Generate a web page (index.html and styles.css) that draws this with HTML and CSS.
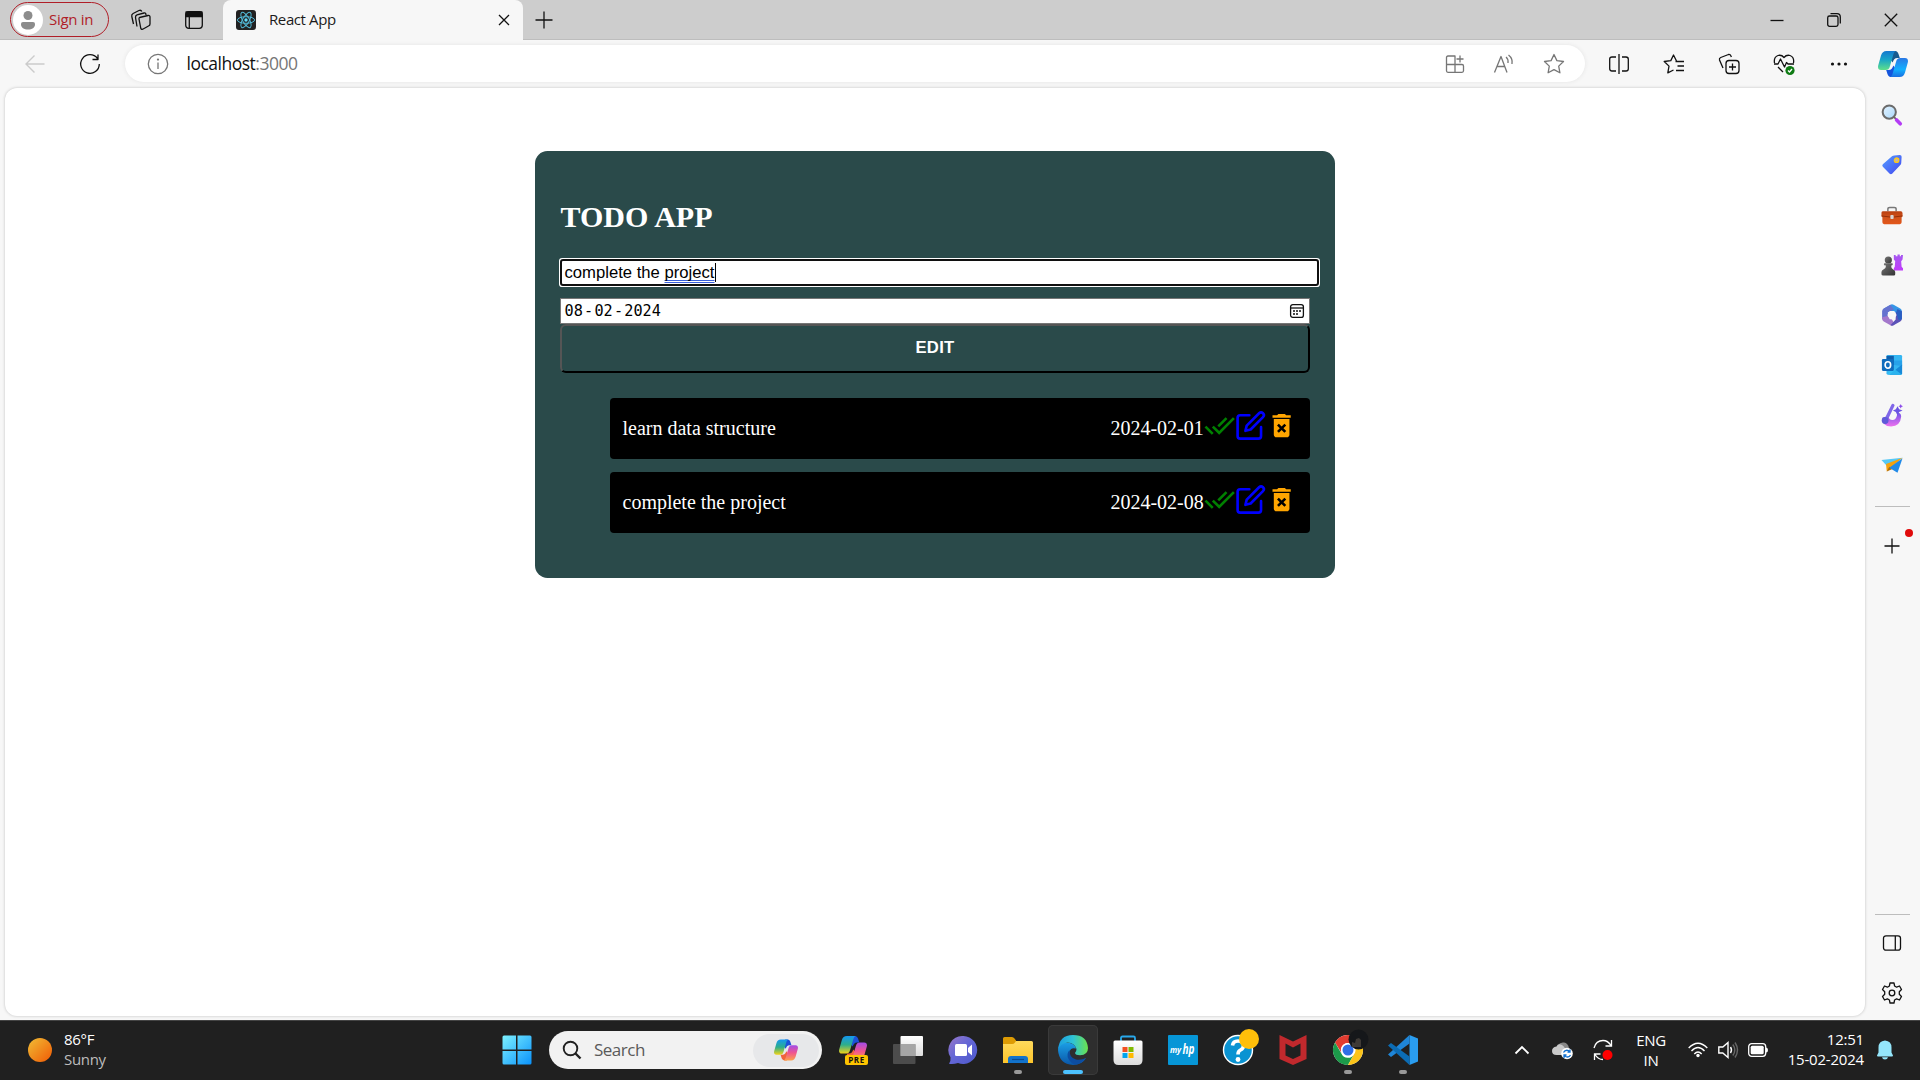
FILE: index.html
```html
<!DOCTYPE html>
<html lang="en">
<head>
<meta charset="utf-8">
<title>React App</title>
<link rel="stylesheet" href="styles.css">
</head>
<body>
<svg class="defs" width="0" height="0">
  <defs>
    <linearGradient id="gTeal" x1="0" y1="0" x2="0" y2="1"><stop offset="0" stop-color="#1478cf"/><stop offset=".45" stop-color="#18a5c8"/><stop offset="1" stop-color="#5fe08a"/></linearGradient>
    <linearGradient id="gBlue" x1="0" y1="0" x2="0" y2="1"><stop offset="0" stop-color="#2a78e4"/><stop offset=".6" stop-color="#12b0ff"/><stop offset="1" stop-color="#1a6fe0"/></linearGradient>
    <linearGradient id="gRain" x1="0" y1="0" x2="0" y2="1"><stop offset="0" stop-color="#1497f0"/><stop offset=".5" stop-color="#2dae8b"/><stop offset="1" stop-color="#f3d317"/></linearGradient>
    <linearGradient id="gPink" x1="0" y1="0" x2="0" y2="1"><stop offset="0" stop-color="#a24be8"/><stop offset=".5" stop-color="#f0548f"/><stop offset="1" stop-color="#fda14a"/></linearGradient>
    <linearGradient id="gWin" x1="0" y1="0" x2="1" y2="1"><stop offset="0" stop-color="#7df1ff"/><stop offset="1" stop-color="#0a92fb"/></linearGradient>
    <linearGradient id="gSun" x1="0" y1="0" x2="1" y2="1"><stop offset="0" stop-color="#f0bd35"/><stop offset="1" stop-color="#f05a05"/></linearGradient>
    <linearGradient id="gTag" x1="0" y1="0" x2="1" y2="1"><stop offset="0" stop-color="#54a2ff"/><stop offset="1" stop-color="#4444f0"/></linearGradient>
    <linearGradient id="gBox" x1="0" y1="0" x2="0" y2="1"><stop offset="0" stop-color="#b93f10"/><stop offset=".5" stop-color="#d3541c"/><stop offset="1" stop-color="#e2561a"/></linearGradient>
    <linearGradient id="gRook" x1="0" y1="0" x2="0" y2="1"><stop offset="0" stop-color="#a55af0"/><stop offset="1" stop-color="#c13cfb"/></linearGradient>
    <linearGradient id="gPawn" x1="0" y1="0" x2="1" y2="1"><stop offset="0" stop-color="#777"/><stop offset="1" stop-color="#333"/></linearGradient>
    <linearGradient id="gLens" x1="0" y1="0" x2="1" y2="1"><stop offset="0" stop-color="#e4f3ff"/><stop offset="1" stop-color="#a9d8fb"/></linearGradient>
    <linearGradient id="gDrop" x1="0" y1="0" x2="0" y2="1"><stop offset="0" stop-color="#7054e8"/><stop offset="1" stop-color="#ed70ee"/></linearGradient>
    <linearGradient id="gFolder" x1="0" y1="0" x2="0" y2="1"><stop offset="0" stop-color="#ffda5c"/><stop offset="1" stop-color="#fdc52c"/></linearGradient>
    <linearGradient id="gEdgeA" x1="0" y1="0" x2="1" y2="0"><stop offset="0" stop-color="#1b9de0"/><stop offset=".5" stop-color="#2fc3d6"/><stop offset="1" stop-color="#6be34c"/></linearGradient>
    <linearGradient id="gEdgeB" x1="0" y1="0" x2="0" y2="1"><stop offset="0" stop-color="#1b9fe6"/><stop offset="1" stop-color="#0a56a8"/></linearGradient>
    <linearGradient id="gStore" x1="0" y1="0" x2="0" y2="1"><stop offset="0" stop-color="#fff"/><stop offset="1" stop-color="#dcdcdc"/></linearGradient>
    <linearGradient id="gChat" x1="0" y1="0" x2="1" y2="1"><stop offset="0" stop-color="#9a78c8"/><stop offset=".45" stop-color="#6567d6"/><stop offset="1" stop-color="#4c58cc"/></linearGradient>
    <linearGradient id="gTask" x1="0" y1="0" x2="0" y2="1"><stop offset="0" stop-color="#fff"/><stop offset="1" stop-color="#ddd"/></linearGradient>
    <symbol id="copilot" viewBox="0 0 30 26">
      <path d="M14 0h2.500c3 0 3.800 2 4.500 4.500l.8 2.500h-2.300c-3 0-4 2-4.800 4.500L12 8z" class="cd"/>
      <path d="M16 26h-2.500c-3 0-3.800-2-4.500-4.500L8.200 19h2.300c3 0 4-2 4.800-4.500L18 18z" class="cc"/>
      <path d="M8.500 0h9.500c-1.500.5-2.200 2-2.800 4L12 15c-.8 3-2 4-4.500 4H3C.5 19-.4 17 .2 14.500L3 4.500C4 1.500 5.500 0 8.500 0z" class="ca"/>
      <path d="M21.500 26H12c1.500-.5 2.200-2 2.800-4L18 11c.8-3 2-4 4.500-4H27c2.500 0 3.400 2 2.800 4.500L27 21.500c-1 3-2.500 4.500-5.500 4.500z" class="cb"/>
    </symbol>
  </defs>
</svg>

<div class="browser">
  <header class="tabstrip">
    <div class="signin">
      <svg width="30" height="30"><circle cx="15" cy="15" r="15" fill="#fff"/><circle cx="15" cy="10.500" r="4.500" fill="#8c8c8c"/><path d="M8 19q0-2 2-2h10q2 0 2 2c0 4-3 5.500-7 5.500S8 23 8 19z" fill="#8c8c8c"/></svg>
      <span>Sign in</span>
    </div>
    <svg class="workspaces line" width="22" height="22" viewBox="0 0 22 22"><path d="M9.500 8.500l8.500-2q2-.3 2 1.500v7q0 1.500-1.500 2l-5.800 3.200q-1.700.6-2-1.400L9 10q-.1-1.200.5-1.500z"/><path d="M7 17.500l-1.500-9q-.2-2 1.500-2.700L14 4M16 6q0-2.500-2-2M3.500 15L1.800 7.500q-.5-2 1.300-3L9 1.500q2-.8 2.800 1"/></svg>
    <svg class="tabactions line" width="20" height="20" viewBox="0 0 20 20"><rect x="1.700" y="1.700" width="16.600" height="16.600" rx="3"/><path d="M2 2h16v4.500H2z" fill="#111"/><path d="M5.300 6v12"/></svg>
    <div class="tab">
      <svg width="20" height="20" viewBox="0 0 20 20"><rect width="20" height="20" rx="3" fill="#222"/><g fill="none" stroke="#53b9d6" stroke-width="1"><ellipse cx="10" cy="10" rx="8.600" ry="3.300"/><ellipse cx="10" cy="10" rx="8.600" ry="3.300" transform="rotate(60 10 10)"/><ellipse cx="10" cy="10" rx="8.600" ry="3.300" transform="rotate(120 10 10)"/></g><circle cx="10" cy="10" r="1.700" fill="#61dafb"/></svg>
      <span>React App</span>
      <svg class="line" width="12" height="12" viewBox="0 0 12 12"><path d="M1 1l10 10M11 1L1 11"/></svg>
    </div>
    <svg class="newtab line" width="18" height="18" viewBox="0 0 18 18"><path d="M9 .5v17M.5 9h17"/></svg>
    <div class="winctl">
      <svg class="line" width="14" height="14" viewBox="0 0 14 14"><path d="M.5 7.500h13"/></svg>
      <svg class="line" width="14" height="14" viewBox="0 0 14 14"><rect x=".7" y="3" width="10.300" height="10.300" rx="1.800"/><path d="M3.500.7H10q3.300 0 3.300 3.300v6.500"/></svg>
      <svg class="line" width="14" height="14" viewBox="0 0 14 14"><path d="M.8.800l12.400 12.400M13.200.8L.8 13.200"/></svg>
    </div>
  </header>

  <div class="toolbar">
    <svg class="back" width="20" height="20" viewBox="0 0 20 20"><path d="M19.500 10H1M9.500 1.500L1 10l8.500 8.500"/></svg>
    <svg class="reload line" width="22" height="22" viewBox="0 0 22 22"><path d="M18.500 5.500A9.300 9.300 0 1 0 20.300 11M19 1.500v5h-5.500"/></svg>
    <div class="address">
      <svg class="grey info" width="22" height="22" viewBox="0 0 22 22"><circle cx="11" cy="11" r="9.700"/><path d="M11 9.500V16"/><circle cx="11" cy="6.600" r=".5"/></svg>
      <span class="url">localhost<i>:3000</i></span>
      <div class="addr-icons">
        <svg class="grey" width="20" height="20" viewBox="0 0 20 20"><path d="M10 18.300V2H3Q1.500 2 1.500 3.500v13.300q0 1.500 1.500 1.500h14q1.500 0 1.500-1.500V12q0-1.500-1.500-1.500H1.500M15 1.500v7M11.500 5h7"/></svg>
        <svg class="grey" width="22" height="20" viewBox="0 0 22 20"><path d="M1.500 18.500L8 2.500l6 16M4 12.500h8M13 3q2.500 2 2 6M15.500 1q4.500 3.500 3.500 9"/></svg>
        <svg class="grey" width="22" height="22" viewBox="0 0 22 22"><path d="M11 1.500l2.900 6.100 6.600.9-4.800 4.600 1.200 6.700L11 16.600l-5.900 3.200 1.200-6.700L1.500 8.500l6.600-.9z"/></svg>
      </div>
    </div>
    <div class="tools">
      <svg class="line" width="22" height="22" viewBox="0 0 22 22"><path d="M11 1v20M8 4H4Q1.700 4 1.700 6v9.500Q1.700 18 4 18h4M14 4h4q2.300 0 2.300 2.200v9.600q0 2.200-2.300 2.200h-4"/></svg>
      <svg class="line" width="22" height="22" viewBox="0 0 22 22"><path d="M13.500 8L10.500 2 7.800 7.600 1.200 8.500l4.800 4.600-1.200 6.700L10.500 17M12.500 8.500H21M14.500 13H21M13 17.500h8"/></svg>
      <svg class="line" width="22" height="22" viewBox="0 0 22 22"><rect x="8" y="7.500" width="13" height="13" rx="3"/><path d="M14.500 10.500v7M11 14h7M5 15L1.500 7Q1 5.200 2.700 4.500L10.500 1.500q2-.5 2.900 2.500"/></svg>
      <svg class="line" width="22" height="22" viewBox="0 0 22 22"><path d="M1.500 10Q.5 4 5 2.500q3.500-1 6 2 2.500-3 6-2Q21.500 4 20.500 10M1 11h4l2.500-5 4 8 2-4.500 1.500 1.500h6M5 14l5 5"/><circle cx="17" cy="17.500" r="4.600" fill="#0f7b14" stroke="none"/><path d="M15 17.500l1.500 1.500 2.500-3" stroke="#fff"/></svg>
      <svg width="22" height="22" viewBox="0 0 22 22" fill="#111"><circle cx="4.500" cy="11" r="1.600"/><circle cx="11" cy="11" r="1.600"/><circle cx="17.500" cy="11" r="1.600"/></svg>
    </div>
    <svg class="cop cop-edge" width="30" height="26"><use href="#copilot"/></svg>
  </div>

  <div class="content">
    <main class="viewport">
      <section class="card">
        <h1>TODO APP</h1>
        <div class="task-input">complete the <span class="grammar">project</span><span class="caret"></span></div>
        <div class="date-input">
          <span>08</span><span>-</span><span>02</span><span>-</span><span>2024</span>
          <svg class="line cal" width="14" height="14" viewBox="0 0 14 14"><rect x=".6" y=".6" width="12.800" height="12.800" rx="2.200"/><path d="M.6 4h12.800"/><path d="M3 7h2m1 0h2m1 0h2M3 10h2m1 0h2" stroke-width="1.500"/></svg>
        </div>
        <button class="edit-btn" type="button">EDIT</button>
        <ul class="list">
          <li><span>learn data structure</span><time>2024-02-01</time>
            <svg class="done" viewBox="0 0 24 24"><path d="M18 7l-1.410-1.410-6.340 6.340 1.410 1.410L18 7zm4.240-1.410L11.660 16.170 7.480 12l-1.410 1.410L11.660 19l12-12-1.420-1.410zM.41 13.410L6 19l1.410-1.410L1.830 12 .41 13.410z"/></svg>
            <svg class="edit" viewBox="0 0 24 24"><path d="M11 4H4a2 2 0 0 0-2 2v14a2 2 0 0 0 2 2h14a2 2 0 0 0 2-2v-7"/><path d="M18.500 2.500a2.121 2.121 0 0 1 3 3L12 15l-4 1 1-4 9.500-9.500z"/></svg>
            <svg class="trash" viewBox="0 0 24 24"><path d="M6 19c0 1.100.9 2 2 2h8c1.100 0 2-.9 2-2V7H6v12zm2.460-7.120l1.410-1.410L12 12.590l2.120-2.120 1.410 1.410L13.410 14l2.120 2.120-1.410 1.410L12 15.410l-2.120 2.120-1.410-1.410L10.590 14l-2.130-2.120zM15.500 4l-1-1h-5l-1 1H5v2h14V4z"/></svg>
          </li>
          <li><span>complete the project</span><time>2024-02-08</time>
            <svg class="done" viewBox="0 0 24 24"><path d="M18 7l-1.410-1.410-6.340 6.340 1.410 1.410L18 7zm4.240-1.410L11.660 16.170 7.480 12l-1.410 1.410L11.660 19l12-12-1.420-1.410zM.41 13.410L6 19l1.410-1.410L1.830 12 .41 13.410z"/></svg>
            <svg class="edit" viewBox="0 0 24 24"><path d="M11 4H4a2 2 0 0 0-2 2v14a2 2 0 0 0 2 2h14a2 2 0 0 0 2-2v-7"/><path d="M18.500 2.500a2.121 2.121 0 0 1 3 3L12 15l-4 1 1-4 9.500-9.500z"/></svg>
            <svg class="trash" viewBox="0 0 24 24"><path d="M6 19c0 1.100.9 2 2 2h8c1.100 0 2-.9 2-2V7H6v12zm2.460-7.120l1.410-1.410L12 12.590l2.120-2.120 1.410 1.410L13.410 14l2.120 2.120-1.410 1.410L12 15.410l-2.120 2.120-1.410-1.410L10.590 14l-2.130-2.120zM15.500 4l-1-1h-5l-1 1H5v2h14V4z"/></svg>
          </li>
        </ul>
      </section>
    </main>

    <aside class="sidebar">
      <div class="apps">
        <svg viewBox="0 0 24 24"><path d="M14 14l3 3" stroke="#666" stroke-width="2"/><path d="M17 17.500l4 4" stroke="#b43cf5" stroke-width="4" stroke-linecap="round"/><circle cx="9" cy="8.800" r="7.200" fill="url(#gLens)" stroke="#6b6b6b" stroke-width="2.200"/></svg>
        <svg viewBox="0 0 24 24"><path d="M12 2.500Q13 1.500 14.500 1.500L20.500 1q2 0 2 2l-.4 6.500q0 1.500-1 2.500l-9 9.500q-1.300 1-2.600 0l-7.500-7.500q-1.200-1.500 0-2.800z" fill="url(#gTag)"/><circle cx="17" cy="6.800" r="2.300" fill="#b9b3c4" stroke="#fbc721" stroke-width="1.700"/></svg>
        <svg viewBox="0 0 24 24"><path d="M7.500 8V5.500q0-1.800 2-1.800h5q2 0 2 1.800V8" fill="none" stroke="#777" stroke-width="1.600"/><path d="M.5 9.500Q.5 8 2.500 8h19q2 0 2 2v2.500q0 1.500-1 2V20q0 2-2 2h-17q-2 0-2-2v-5.500Q.5 14 .5 12z" fill="url(#gBox)"/><path d="M.5 13l11.500 1.500 11.500-1.500" stroke="#8e2c08" fill="none"/><rect x="10.200" y="12" width="3.600" height="4.400" rx="1" fill="#d7d7d7"/></svg>
        <svg viewBox="0 0 24 24"><path d="M14 1h2v1.500h2V.5h2.500v2h1.300V1h2.200l-.5 5-1.500 2 .5 6 1.500 1.500V18h-10v-2.500l1-1.500.5-6-1.500-2z" fill="url(#gRook)"/><circle cx="8" cy="6.500" r="3.900" fill="url(#gPawn)"/><path d="M3.500 10h9q1 1.500-.5 2.500h-1q0 3 2 4 2.500 1.200 2.500 3V22q0 1.500-1.500 1.500H2.500Q.5 23.500.5 22v-2.500q0-2 2.500-3 2.500-1 2.500-4H4Q2.500 11.500 3.500 10z" fill="url(#gPawn)"/></svg>
        <svg viewBox="0 0 24 24"><path d="M10.300.8Q12 0 13.700.8L21 5q1.800 1 1.800 3L17 9.500 7 8 2 5.800z" fill="#3595e6"/><path d="M10.300.8L3 5Q1.200 6 1.200 8v8.500L7.500 14V9L14 6z" fill="#6572cf"/><path d="M1.200 14.500V16q0 2 1.800 3l7.300 4.200q1.700.8 3.400 0L15 22l-3-5-5-4z" fill="#a478cc"/><path d="M22.800 8v8q0 2-1.800 3l-7.300 4.200q-1.700.8-3.400 0L16 17V9z" fill="#5b52b8"/><path d="M22.800 8v8q-1 2-4 1L16.500 9 18 5.500z" fill="#285fc3"/><path d="M9.500 7.500h5L17 12l-2.500 4.500h-5L7 12z" fill="#f7f7f7"/></svg>
        <svg viewBox="0 0 24 24"><rect x="6" y="1" width="17" height="21.500" rx="1.500" fill="#35b6f2"/><path d="M6 2h8v10H6z" fill="#0e5eac"/><path d="M14 7h9v6l-9-1z" fill="#27a2ea"/><path d="M9 22.500l14-11V21q0 1.500-1.500 1.500z" fill="#1689d9"/><path d="M9 12l14 10.500H8z" fill="#34c4f6" opacity=".7"/><rect x="1" y="5.500" width="13" height="13" rx="1.200" fill="#0f6cbd"/><ellipse cx="7.500" cy="12" rx="3" ry="3.500" fill="none" stroke="#fff" stroke-width="1.800"/></svg>
        <svg viewBox="0 0 24 24"><path d="M1.500 15Q1 24.500 11 24.500T22 14q0-4-3-4.500L17.500 12q-1 5.500-5 5.500T8 13z" fill="url(#gDrop)"/><path d="M13 1.500L6.500 15" stroke="#8067e8" stroke-width="3.600" stroke-linecap="round"/><circle cx="4.500" cy="18" r="3.700" fill="#5f5ad8"/><path d="M18 2.500l1.800 3.300L23.500 7l-3.700 1.800L18 12.500l-1.800-3.700L13 7l3.200-1.200z" fill="#6a55e3"/><path d="M21.500 0l.8 1.700L24 2.500l-1.700.8-.8 1.700-.8-1.700-1.700-.8 1.700-.8z" fill="#8c4bea"/></svg>
        <svg viewBox="0 0 24 24"><path d="M.5 6.500L23.500 4 7 13.500z" fill="#55c8f5"/><path d="M23.500 4L5.500 11l.8 8z" fill="#f6a20c"/><path d="M6.300 19L9 14l4 2z" fill="#b36b00"/><path d="M23.500 4.500L18 20.500 9 15z" fill="#218ae8"/></svg>
      </div>
      <hr>
      <div class="add">
        <svg class="line" width="16" height="16" viewBox="0 0 16 16"><path d="M8 .5v15M.5 8h15"/></svg>
        <b class="dot"></b>
      </div>
      <hr class="lower">
      <svg class="line panel" width="20" height="16" viewBox="0 0 20 16"><rect x="1.500" y=".8" width="17" height="14.400" rx="2.500"/><path d="M13.300 1v14"/></svg>
      <svg class="line gear" width="24" height="24" viewBox="0 0 24 24"><circle cx="12" cy="12" r="2.800"/><path d="M10 2h4l.6 3 2 1.200L19.500 5l2 3.500L19.300 10.700v2.600L21.500 15.500l-2 3.500-2.900-1.200-2 1.200L14 22h-4l-.6-3-2-1.200L4.500 19l-2-3.500L4.700 13.300v-2.600L2.500 8.500l2-3.500 2.900 1.200 2-1.200z"/></svg>
    </aside>
  </div>
</div>

<footer class="taskbar">
  <div class="weather">
    <svg width="24" height="24"><circle cx="12" cy="12" r="12" fill="url(#gSun)"/></svg>
    <div class="twolines"><div>86°F</div><div class="dim">Sunny</div></div>
  </div>
  <svg class="start" width="30" height="30" viewBox="0 0 30 30"><path d="M2 .5h12v14H.5V2Q.5.500 2 .5zM15.500.5H28q1.500 0 1.500 1.500v12.500h-14zM.5 16H14v13.500H2Q.5 29.500.5 28zM15.500 16h14v12q0 1.500-1.500 1.500H15.500z" fill="url(#gWin)"/></svg>
  <div class="search">
    <svg width="20" height="20" viewBox="0 0 20 20"><circle cx="8.500" cy="8.500" r="6.800" fill="none" stroke="#222" stroke-width="1.900"/><path d="M13.500 13.500l5 5" stroke="#222" stroke-width="2.400"/></svg>
    <span>Search</span>
    <div class="search-chip"><svg class="cop cop-rain" width="24" height="22"><use href="#copilot"/></svg></div>
  </div>
  <div class="pinned">
    <div class="slot"><svg class="cop cop-rain" viewBox="0 0 30 30"><svg x="1" y="1" width="28" height="27" preserveAspectRatio="none" viewBox="0 0 30 26"><use href="#copilot"/></svg><rect x="7" y="20" width="23" height="10" rx="2" fill="#fdc400"/><text x="18.500" y="27.800" class="pre">PRE</text></svg></div>
    <div class="slot"><svg viewBox="0 0 30 30"><rect x="7.500" y="1" width="22.500" height="20" rx="1" fill="url(#gTask)"/><rect y="9" width="22.500" height="20" rx="1" fill="#606060" opacity=".7"/><rect x="7.500" y="9" width="15" height="12" fill="#a6a6a6"/></svg></div>
    <div class="slot"><svg viewBox="0 0 30 30"><path d="M15.500 1A14 14 0 1 1 10 28q-4.500 1.500-9 .8 2-3 1.500-6.500A14 14 0 0 1 15.500 1z" fill="url(#gChat)"/><rect x="7" y="9" width="12" height="12" rx="1.500" fill="#fff"/><path d="M20 13l4-3.500v11L20 17z" fill="#fff"/></svg></div>
    <div class="slot run"><svg viewBox="0 0 30 30"><path d="M0 3.500Q0 2 1.500 2H9q1.500 0 2.500 1.500L13 5.500V12H0z" fill="#dd9b04"/><path d="M0 9h9q2 0 3-1.500l1-1.500h15.500Q30 6 30 7.500V28H0z" fill="url(#gFolder)"/><path d="M5 28v-4q0-3 3-3h14q3 0 3 3v4z" fill="#1273cc"/><path d="M9 24.500h12" stroke="#0a4b91" stroke-width="1.200"/></svg></div>
    <div class="slot active"><svg viewBox="0 0 30 30"><path d="M0 15Q1 7 8 7.500q9 .5 10 6-5-1.500-6.500 3Q10.500 25 20 26q4 0 8-3Q24 30 15 30 1 29 0 15z" fill="url(#gEdgeB)"/><path d="M0 15Q1 0 15 0q14 0 15 13 0 7-8 7.200-4.500 0-5-2.200 1.500-1.500 1.500-4Q16.500 7.500 9.500 7.500 2.500 8 0 15z" fill="url(#gEdgeA)"/><path d="M11.500 15Q8 19 10.500 24q3 5.500 8 5.500 6-1.500 9.500-6.500-5 2.500-10 1.500-7-2-6.500-9.500z" fill="#0c4da2"/></svg></div>
    <div class="slot"><svg viewBox="0 0 30 30"><path d="M8 7V3q0-1.500 1.500-1.500h11Q22 1.500 22 3v4" fill="none" stroke="#28a8ea" stroke-width="1.800"/><path d="M.5 7Q.5 5.500 2 5.500h26q1.500 0 1.500 1.500v18q0 5-5 5h-19q-5 0-5-5z" fill="url(#gStore)"/><path d="M9.500 12h5v5h-5z" fill="#f25022"/><path d="M15.500 12h5v5h-5z" fill="#7fba00"/><path d="M9.500 18h5v5h-5z" fill="#00a4ef"/><path d="M15.500 18h5v5h-5z" fill="#ffb900"/></svg></div>
    <div class="slot"><svg viewBox="0 0 30 30"><rect width="30" height="30" rx="1" fill="#0696d7"/><text x="2" y="18" class="my">my</text><text x="14.500" y="19" class="hp" textLength="12" lengthAdjust="spacingAndGlyphs">hp</text></svg></div>
    <div class="slot"><svg viewBox="0 0 30 30"><circle cx="15" cy="15" r="14.500" fill="#0a93d2" stroke="#fff" stroke-width="1.400"/><path d="M9.500 10.500Q10 6 15 6t5.500 4.500q0 3-3 4.500-2.500 1.200-2.500 4.500" fill="none" stroke="#fff" stroke-width="3.600"/><circle cx="15" cy="24.500" r="2.400" fill="#fff"/><circle cx="26" cy="4" r="10" fill="#ffbf0a"/></svg></div>
    <div class="slot"><svg viewBox="0 0 30 30"><path d="M1.500 0L15 6.500 28.500 0v24L15 30 1.500 24zM7.500 8.500v12L15 24l7.500-3.500v-12L15 12.500z" fill="#c1292d" fill-rule="evenodd"/></svg></div>
    <div class="slot run"><svg viewBox="0 0 30 30"><circle cx="15" cy="15" r="15" fill="#fff"/><path d="M15 8h13.300A15 15 0 0 0 2 7.500l7 11.200A7 7 0 0 1 15 8z" fill="#e23c30"/><path d="M2 7.500A15 15 0 0 0 15 30l6-10.800a7 7 0 0 1-12.500-.5z" fill="#1c9a4a"/><path d="M15 8h13.300A15 15 0 0 1 15 30l6.200-11A7 7 0 0 0 15 8z" fill="#fcc419"/><circle cx="15" cy="15" r="7" fill="#fff"/><circle cx="15" cy="15" r="5.500" fill="#2f6fe6"/><circle cx="25.500" cy="4.500" r="10" fill="#15171a"/><path d="M19 12V7l3 1 1-4 3-1 2 2v7z" fill="#3f3a36"/></svg></div>
    <div class="slot run"><svg viewBox="0 0 30 30"><path d="M21.500 0L30 3.500v23L21.500 30z" fill="#2a9df0"/><path d="M21.500 0L0 19.500l3 2.500L21.500 8.500z" fill="#1f86d8"/><path d="M21.500 30L0 10.500 3 8l18.500 13.500z" fill="#0b6cb5"/></svg></div>
  </div>
  <div class="tray">
    <svg class="chev" width="16" height="10" viewBox="0 0 16 10"><path d="M1.500 8.500L8 2l6.500 6.500" fill="none" stroke="#fff" stroke-width="1.800"/></svg>
    <svg class="cloud" width="21" height="20" viewBox="0 0 21 20"><path d="M6 5Q8 2 12 2.500t5 5.500l-8 4z" fill="#888"/><path d="M4.500 15Q0 15 0 11q0-4 4.500-4.500Q6 3 10 5t4 10z" fill="#c9c9c9"/><circle cx="15" cy="13.500" r="5.800" fill="#fff"/><path d="M11.500 12.500q1.500-3 5-2l1.500 1.500m0-2.500V12h-2.500M18.500 15q-1.500 3-5 1.500L12 15m0 3v-3h2.500" fill="none" stroke="#1271d1" stroke-width="1.300"/></svg>
    <svg class="sync" width="22" height="22" viewBox="0 0 22 22"><path d="M2 9Q4 1.500 11 1.500q5 0 8 5M19.500 1v6h-6M2.500 21v-6h6M3 15.500q3 5 8 5" fill="none" stroke="#fff" stroke-width="1.300"/><circle cx="15.500" cy="16" r="5" fill="#f00"/></svg>
    <div class="lang"><div>ENG</div><div>IN</div></div>
    <svg class="wifi" width="20" height="16" viewBox="0 0 20 16"><g fill="none" stroke="#fff" stroke-width="1.400"><path d="M.7 6Q10-3.500 19.300 6M3.500 9Q10 2 16.500 9M6.300 12Q10 8 13.700 12"/></g><circle cx="10" cy="13.500" r="1.700" fill="#fff"/></svg>
    <svg class="vol" width="21" height="18" viewBox="0 0 21 18"><path d="M.8 6h4L10 1.500v15L4.800 12h-4zM12.500 6q2 3 0 6" fill="none" stroke="#fff" stroke-width="1.400"/><path d="M14.800 3.500q4 5.500 0 11M17 1.500q5 7.500 0 15" fill="none" stroke="#666" stroke-width="1.400"/></svg>
    <svg class="bat" width="21" height="14" viewBox="0 0 21 14"><rect x=".7" y=".7" width="17" height="12.600" rx="3" fill="none" stroke="#fff" stroke-width="1.300"/><rect x="2.700" y="2.700" width="13" height="8.600" rx="1.500" fill="#fff"/><path d="M18 4.500q2 0 2 2.500t-2 2.500z" fill="#fff"/></svg>
    <div class="clock twolines"><div>12:51</div><div>15-02-2024</div></div>
    <svg class="bell" width="18" height="20" viewBox="0 0 18 20"><path d="M9 .5q6.500.5 6.500 7v5l1.500 3q0 1-1 1H2q-1 0-1-1l1.500-3v-5Q2.500 1 9 .5zM6 17.300h6q-.5 2.200-3 2.200t-3-2.200z" fill="#94e6fb"/></svg>
  </div>
</footer>
</body>
</html>
```
FILE: styles.css
```css
* { box-sizing: border-box; }
body {
  margin: 0;
  width: 1920px;
  height: 1080px;
  overflow: hidden;
  display: flex;
  flex-direction: column;
  background: #f7f7f7;
  font-family: "Open Sans", "Noto Sans", sans-serif;
}
svg { display: block; flex: none; overflow: visible; }
.defs { position: absolute; }
.line { fill: none; stroke: #111; stroke-width: 1.3; stroke-linejoin: round; }
.grey { fill: none; stroke: #767676; stroke-width: 1.3; stroke-linejoin: round; }
.browser { height: 1020px; display: flex; flex-direction: column; }

/* Tab strip */
.tabstrip {
  height: 40px;
  flex: none;
  display: flex;
  align-items: center;
  padding-bottom: 1px;
  background: #cdcdcd;
  box-shadow: inset 0 -1px #bdbdbd;
}
.signin {
  width: 99px;
  height: 35px;
  margin-left: 10px;
  padding-left: 2px;
  display: flex;
  align-items: center;
  gap: 6px;
  border: 1.500px solid #b01e28;
  border-radius: 18px;
  color: #b01e28;
  font-size: 15px;
  letter-spacing: -0.3px;
  white-space: nowrap;
}
.signin span { padding-bottom: 1px; }
.workspaces { margin-left: 21px; }
.tabactions { margin-left: 32px; }
.tab {
  width: 300px;
  height: 40px;
  margin: 0 0 -1px 19px;
  padding: 0 13px 1px 13px;
  display: flex;
  align-items: center;
  background: #f7f7f7;
  border-radius: 8px 8px 0 0;
  font-size: 15px;
  letter-spacing: -0.4px;
  color: #1b1b1b;
}
.tab span { margin-left: 13px; padding-bottom: 1px; flex: 1; }
.newtab { margin-left: 12px; }
.winctl { margin-left: auto; margin-right: 22px; display: flex; gap: 43px; }

/* Toolbar */
.toolbar { height: 47px; flex: none; display: flex; align-items: center; }
.back { margin-left: 25px; fill: none; stroke: #cbcbcb; stroke-width: 1.4; }
.reload { margin-left: 34px; }
.address {
  width: 1460px;
  height: 37px;
  margin-left: 24px;
  padding: 0 20px 0 21px;
  display: flex;
  align-items: center;
  background: #fff;
  border-radius: 19px;
  box-shadow: 0 0 4px #e4e4e4;
}
.info { margin-left: .5px; }
.url { margin-left: 18px; padding-bottom: 2px; font-size: 17.500px; letter-spacing: -0.5px; color: #111; }
.url i { font-style: normal; color: #767676; }
.addr-icons { margin-left: auto; display: flex; align-items: center; gap: 28px; }
.tools { margin-left: 23px; display: flex; gap: 33px; }
.cop-edge { margin-left: 28px; }
.cop-edge { --a: url(#gTeal); --b: url(#gBlue); --c: #1455dc; --d: #175a8f; }
.cop-rain { --a: url(#gRain); --b: url(#gPink); --c: #f0643c; --d: #1c51d8; }
.ca { fill: var(--a); }
.cb { fill: var(--b); }
.cc { fill: var(--c); }
.cd { fill: var(--d); }

.content { flex: 1; display: flex; padding-left: 5px; }
.viewport {
  width: 1860px;
  height: 928px;
  margin-top: 1px;
  padding: 63px 0 0 530px;
  background: #fff;
  border-radius: 12px;
  box-shadow: 0 0 3px #bdbdbd;
}

/* Todo card */
.card {
  width: 800px;
  height: 427px;
  padding: 48px 25px 0;
  background: #2a4a4a;
  border-radius: 12.500px;
  color: #fff;
}
.card h1 {
  margin: 0 0 27px .5px;
  font: bold 30px/35px "Liberation Serif", serif;
}
.task-input {
  width: 755px;
  height: 23px;
  margin: 0 0 14px 2px;
  padding: 0 2.500px;
  display: flex;
  align-items: center;
  white-space: pre;
  background: #fff;
  border-radius: 1px;
  outline: 2px solid #101010;
  box-shadow: 0 0 0 3px #fff;
  color: #000;
  font: 16.670px/19px "Liberation Sans", sans-serif;
}
.grammar {
  text-decoration: underline double #3a5fd8 1px;
  text-underline-offset: 2px;
  text-decoration-skip-ink: none;
}
.caret { width: 1px; height: 19px; background: #000; }
.date-input {
  height: 26px;
  padding: 0 5px 0 3px;
  display: flex;
  align-items: center;
  border: 1px solid #767676;
  background: #fff;
  color: #000;
  font: 15.200px/20px "DejaVu Sans Mono", monospace;
}
.date-input span { padding: 0 .6px; }
.cal { margin-left: auto; }
.edit-btn {
  display: block;
  width: 750px;
  height: 49px;
  margin: 0 0 25px;
  padding: 0 0 2px;
  border: 2px solid;
  border-color: #555 #000 #000 #555;
  border-radius: 6px;
  background: #2a4a4a;
  color: #fff;
  font: bold 16.670px "Liberation Sans", sans-serif;
  letter-spacing: .3px;
}
.list { margin: 0; padding: 0 0 0 50px; display: grid; gap: 13px; list-style: none; }
.list li {
  height: 61px;
  padding: 12px 12.500px;
  display: flex;
  background: #000;
  border-radius: 4px;
  font: 20px/36px "Liberation Serif", serif;
}
.list time { margin-left: auto; }
.list svg { width: 31.250px; height: 31.250px; }
.done { fill: green; }
.edit { fill: none; stroke: blue; stroke-width: 2; stroke-linecap: round; stroke-linejoin: round; }
.trash { fill: orange; }

/* Edge sidebar */
.sidebar {
  width: 55px;
  padding-right: 1px;
  display: flex;
  flex-direction: column;
  align-items: center;
}
.apps { margin-top: 17px; display: grid; gap: 28px; }
.apps svg { width: 22px; height: 22px; }
.sidebar hr { width: 35px; margin: 30px 0 0; border: 0; border-top: 1px solid #bdbdbd; }
.add { position: relative; margin-top: 31px; }
.dot { position: absolute; left: 21px; top: -9px; width: 8px; height: 8px; border-radius: 50%; background: #e00b0b; }
.sidebar .lower { margin-top: auto; }
.panel { margin-top: 20px; }
.gear { margin: 30px 0 15px; }

/* Taskbar */
.taskbar {
  height: 60px;
  display: flex;
  align-items: center;
  background: #202020;
  box-shadow: inset 0 1px #444;
  color: #fff;
  font-size: 15px;
  line-height: 20px;
  letter-spacing: -0.3px;
}
.weather { width: 501.500px; padding-left: 28px; display: flex; align-items: center; gap: 12px; }
.twolines { padding-bottom: 2px; }
.dim { color: #bdbdbd; }
.search {
  width: 273px;
  height: 38px;
  margin-left: 17.500px;
  padding: 0 3px 0 13px;
  display: flex;
  align-items: center;
  background: #f2f2f2;
  border-radius: 19px;
  color: #5a5a5a;
  font-size: 17px;
  letter-spacing: -0.5px;
}
.search span { margin-left: 12px; }
.search-chip {
  width: 66px;
  height: 33px;
  margin-left: auto;
  display: flex;
  align-items: center;
  justify-content: center;
  background: #e7e8ea;
  border-radius: 17px;
}
.pinned { margin-left: 6px; display: flex; gap: 5px; }
.slot {
  position: relative;
  width: 50px;
  height: 50px;
  display: flex;
  align-items: center;
  justify-content: center;
  border-radius: 5px;
}
.slot svg { width: 30px; height: 30px; }
.slot > svg > svg { width: 28px; height: 24px; }
.active { background: #2e2e2e; box-shadow: inset 0 0 0 1px #3a3a3a; }
.run::after, .active::after {
  content: "";
  position: absolute;
  left: 21px;
  bottom: 1px;
  width: 8px;
  height: 4px;
  border-radius: 2px;
  background: #999;
}
.active::after { left: 15px; width: 20px; background: #4cc2ff; }
.pre { font: bold 8px "Open Sans", sans-serif; text-anchor: middle; fill: #111; letter-spacing: .5px; }
.my { font: italic bold 8px "Open Sans", sans-serif; fill: #fff; }
.hp { font: italic bold 14px "Open Sans", sans-serif; fill: #fff; letter-spacing: 0; }
.tray { margin-left: auto; display: flex; align-items: center; height: 60px; }
.cloud { margin-left: 22px; }
.sync { margin-left: 19px; }
.lang { width: 34px; margin-left: 20px; text-align: center; }
.wifi { margin-left: 20px; }
.vol { margin-left: 10px; }
.bat { margin-left: 9px; }
.clock { width: 95px; text-align: right; white-space: nowrap; letter-spacing: -0.2px; }
.bell { margin: 0 26px 0 12px; }
```
